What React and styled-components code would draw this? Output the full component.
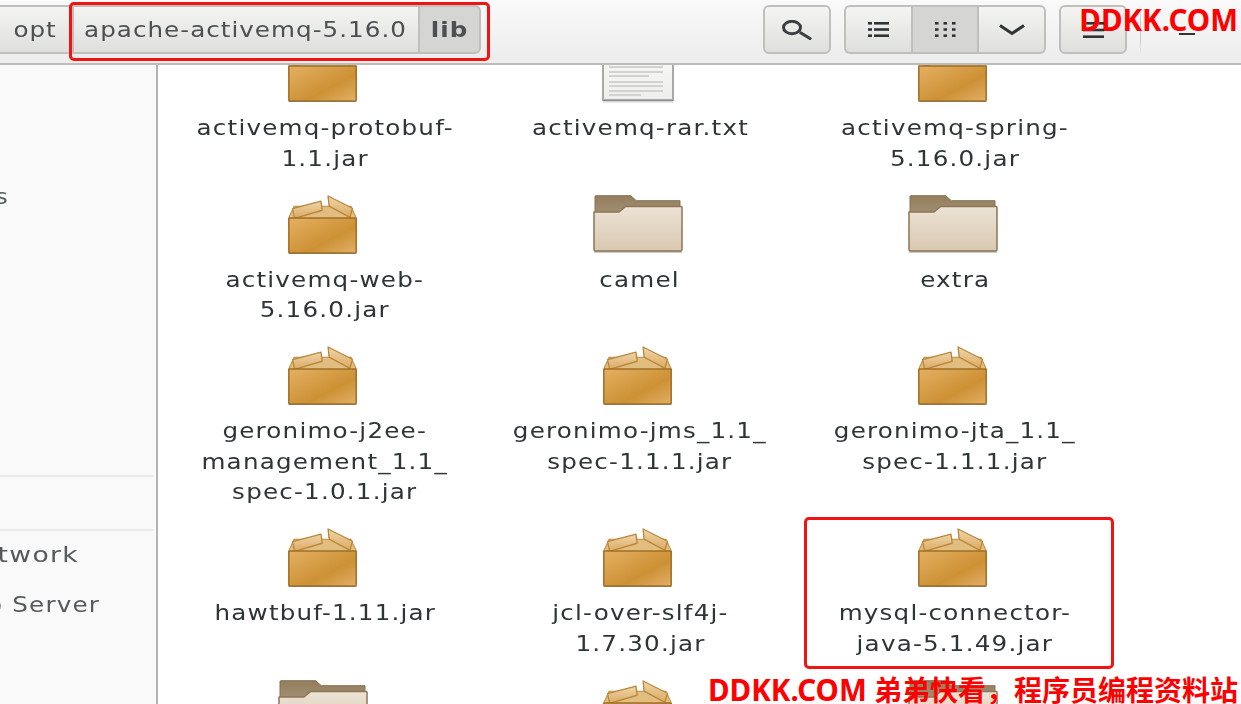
import React, { useId } from "react";
import styled, { createGlobalStyle } from "styled-components";

const Global = createGlobalStyle`
  html, body { margin: 0; padding: 0; background: #fff; overflow: hidden; }
  #root { width: 1241px; height: 704px; }
`;

const Page = styled.div`
  position: relative;
  width: 1241px;
  height: 704px;
  overflow: hidden;
  display: flex;
  flex-direction: column;
  font-family: "DejaVu Sans", sans-serif;
  color: #2e3436;
`;

const Blurred = styled.div`
  display: flex;
  flex-direction: column;
  flex: 1;
  min-height: 0;
  filter: blur(0.6px);
`;

const Toolbar = styled.header`
  flex: none;
  height: 65px;
  box-sizing: border-box;
  display: flex;
  align-items: flex-start;
  padding: 5px 0 0 0;
  background: linear-gradient(#fafafa, #ececec);
  border-bottom: 2px solid #bcbdbb;
`;

const Path = styled.div`
  display: flex;
  height: 49px;
  margin-left: -4px;
`;

const buttonFace = `
  box-sizing: border-box;
  height: 49px;
  display: flex;
  align-items: center;
  justify-content: center;
  background: linear-gradient(#f4f4f3, #dfdfde);
  border: 2px solid #bfc0be;
`;

const Crumb = styled.div`
  ${buttonFace}
  font-size: 20.5px;
  letter-spacing: 0.85px;
  color: #4c5052;
  width: ${(p) => p.$w}px;
  background: ${(p) => (p.$active ? "#d5d5d4" : "")};
  font-weight: ${(p) => (p.$active ? 700 : 400)};
  border-right-width: ${(p) => (p.$last ? "2px" : "0")};
  border-radius: ${(p) => (p.$last ? "0 6px 6px 0" : "0")};
`;

const Stretched = styled.span`
  display: inline-block;
  white-space: nowrap;
  transform: scaleX(1.2);
`;

const Spacer = styled.div`
  flex: 1;
`;

const Actions = styled.div`
  display: flex;
  align-items: flex-start;
  gap: 13px;
  width: 478px;
  flex: none;
`;

const IconButton = styled.div`
  ${buttonFace}
  width: 68px;
  border-radius: 6px;
`;

const Segmented = styled.div`
  display: flex;
  width: 202px;
`;

const Segment = styled.div`
  ${buttonFace}
  flex: 1;
  border-right-width: ${(p) => (p.$last ? "2px" : "0")};
  background: ${(p) => (p.$active ? "#d5d5d4" : "")};
  border-radius: ${(p) =>
    p.$first ? "6px 0 0 6px" : p.$last ? "0 6px 6px 0" : "0"};
`;

const WindowControls = styled.div`
  display: flex;
  align-items: center;
  height: 49px;
  gap: 38px;
`;

const ControlDivider = styled.div`
  width: 1px;
  height: 50px;
  background: linear-gradient(transparent, #c9c9c8 30%, #c9c9c8 70%, transparent);
`;

const Minimize = styled.div`
  width: 16px;
  height: 2.5px;
  background: #2e3436;
  margin-top: 9px;
`;

const Body = styled.div`
  flex: 1;
  min-height: 0;
  display: flex;
  overflow: hidden;
`;

const Sidebar = styled.aside`
  flex: none;
  width: 158px;
  box-sizing: border-box;
  background: #f9f9f9;
  border-right: 2px solid #b3b4b2;
  overflow: hidden;
  display: flex;
  flex-direction: column;
  font-size: 20.5px;
  letter-spacing: 1px;
  color: #555a5c;
`;

const SideRule = styled.div`
  flex: none;
  height: 2px;
  background: #ebebeb;
  margin-right: 2px;
  margin-top: ${(p) => p.$top}px;
`;

const SideItem = styled.div`
  flex: none;
  white-space: nowrap;
  line-height: 30px;
  margin-top: ${(p) => p.$top}px;
  margin-left: ${(p) => p.$left}px;
  transform: scaleX(${(p) => p.$scale});
  transform-origin: left center;
`;

const Main = styled.main`
  flex: 1;
  min-width: 0;
  overflow: hidden;
  background: #fff;
`;

const Grid = styled.div`
  display: grid;
  grid-template-columns: repeat(3, 315px);
  row-gap: 20.5px;
  margin: -22px 0 0 9.5px;
`;

const Cell = styled.div`
  display: flex;
  flex-direction: column;
  align-items: center;
`;

const IconSlot = styled.div`
  height: 58px;
  display: flex;
  align-items: flex-start;
  justify-content: center;
  padding-right: ${(p) => p.$pad}px;
  margin-bottom: 12px;
`;

const Label = styled.div`
  font-size: 20.5px;
  line-height: 30.5px;
  letter-spacing: 1px;
  text-align: center;
  white-space: nowrap;
  color: #2f3436;
  transform: scaleX(1.2);
`;

const Line = styled.div``;

const RedBox = styled.div`
  position: absolute;
  left: ${(p) => p.$x}px;
  top: ${(p) => p.$y}px;
  width: ${(p) => p.$w}px;
  height: ${(p) => p.$h}px;
  box-sizing: border-box;
  border: 3px solid #f01414;
  border-radius: 5px;
`;

const Watermark = styled.div`
  position: absolute;
  right: 3px;
  top: ${(p) => p.$top}px;
  font-family: "Noto Sans", "Noto Sans CJK SC", sans-serif;
  font-weight: 700;
  font-size: 28px;
  line-height: 1;
  color: #fe0000;
  white-space: nowrap;
`;

const WatermarkLatin = styled.span`
  font-size: 29.5px;
`;

function PackageIcon() {
  const id = useId();
  return (
    <svg width="69" height="59" viewBox="0 0 68 58" preserveAspectRatio="none">
      <defs>
        <linearGradient id={id + "b"} x1="0" y1="0" x2="1" y2="1">
          <stop offset="0" stopColor="#e4b062" />
          <stop offset="0.62" stopColor="#cd9135" />
          <stop offset="1" stopColor="#e3b067" />
        </linearGradient>
        <linearGradient id={id + "f"} x1="0" y1="0" x2="0" y2="1">
          <stop offset="0" stopColor="#eed5a9" />
          <stop offset="1" stopColor="#dcaa62" />
        </linearGradient>
      </defs>
      <path d="M6 11 L62 11 L67.5 23 L0.5 23 Z" fill="#e2bd80" stroke="#bb8c42" strokeWidth="1" />
      <path d="M4.5 13.5 L32.5 6 L33.7 15 L6.5 23 Z" fill={`url(#${id}f)`} stroke="#b9883b" strokeWidth="1.3" strokeLinejoin="round" />
      <path d="M39.5 1 L63.5 13 L61 22 L40.5 11 Z" fill={`url(#${id}f)`} stroke="#b9883b" strokeWidth="1.3" strokeLinejoin="round" />
      <rect x="0.8" y="22.5" width="66.4" height="34.5" rx="1" fill={`url(#${id}b)`} stroke="#a06f26" strokeWidth="1.5" />
      <rect x="0" y="57" width="68" height="1" fill="#000" opacity="0.18" />
    </svg>
  );
}

function FolderIcon() {
  const id = useId();
  return (
    <svg width="90" height="58" viewBox="0 0 90 58">
      <defs>
        <linearGradient id={id + "t"} x1="0" y1="0" x2="0" y2="1">
          <stop offset="0" stopColor="#937e5e" />
          <stop offset="1" stopColor="#a8957a" />
        </linearGradient>
        <linearGradient id={id + "g"} x1="0" y1="0" x2="0" y2="1">
          <stop offset="0" stopColor="#ece3d5" />
          <stop offset="1" stopColor="#d9c8b0" />
        </linearGradient>
      </defs>
      <path d="M2 1.5 Q2 0.7 3 0.7 L37.7 0.7 L43.3 5.7 L87 5.7 L87 26 L2 26 Z" fill={`url(#${id}t)`} stroke="#85704f" strokeWidth="1" />
      <path d="M1 17 L26 17 L32.7 11.5 L88.5 11.5 Q89 11.5 89 12.5 L89 54.5 Q89 56 87.5 56 L2.5 56 Q1 56 1 54.5 Z" fill={`url(#${id}g)`} stroke="#8c7654" strokeWidth="1.5" strokeLinejoin="round" />
      <rect x="1" y="56.5" width="88" height="1.5" fill="#000" opacity="0.2" />
    </svg>
  );
}

function DocIcon() {
  const rows = [24, 29, 33, 39, 43, 48, 52];
  const id = useId();
  return (
    <svg width="72" height="60" viewBox="0 0 72 60">
      <defs>
        <linearGradient id={id} x1="0" y1="0" x2="0" y2="1">
          <stop offset="0" stopColor="#fbfbfa" />
          <stop offset="1" stopColor="#eeeeec" />
        </linearGradient>
      </defs>
      <rect x="1" y="-2" width="70" height="59" fill={`url(#${id})`} stroke="#a9aaa8" strokeWidth="2" />
      <rect x="1" y="57" width="70" height="2.5" fill="#000" opacity="0.16" />
      {rows.map((y, i) => (
        <rect key={y} x="7" y={y - 1} width={i === 2 ? 40 : i === 6 ? 32 : 54} height="2" fill="#d2d3d1" />
      ))}
    </svg>
  );
}

const icons = {
  pkg: { Icon: PackageIcon, pad: 6 },
  folder: { Icon: FolderIcon, pad: 4 },
  doc: { Icon: DocIcon, pad: 4 },
};

const files = [
  ["pkg", ["activemq-protobuf-", "1.1.jar"]],
  ["doc", ["activemq-rar.txt", "\u00a0"]],
  ["pkg", ["activemq-spring-", "5.16.0.jar"]],
  ["pkg", ["activemq-web-", "5.16.0.jar"]],
  ["folder", ["camel", "\u00a0"]],
  ["folder", ["extra", "\u00a0"]],
  ["pkg", ["geronimo-j2ee-", "management_1.1_", "spec-1.0.1.jar"]],
  ["pkg", ["geronimo-jms_1.1_", "spec-1.1.1.jar"]],
  ["pkg", ["geronimo-jta_1.1_", "spec-1.1.1.jar"]],
  ["pkg", ["hawtbuf-1.11.jar", "\u00a0"]],
  ["pkg", ["jcl-over-slf4j-", "1.7.30.jar"]],
  ["pkg", ["mysql-connector-", "java-5.1.49.jar"]],
  ["folder", ["\u00a0"]],
  ["pkg", ["\u00a0"]],
  ["folder", ["\u00a0"]],
];

function FileCell({ kind, lines }) {
  const { Icon, pad } = icons[kind];
  return (
    <Cell>
      <IconSlot $pad={pad}>
        <Icon />
      </IconSlot>
      <Label>
        {lines.map((l, i) => (
          <Line key={i}>{l}</Line>
        ))}
      </Label>
    </Cell>
  );
}

export default function App() {
  return (
    <Page>
      <Global />
      <Blurred>
        <Toolbar>
          <Path>
            <Crumb $w={76}><Stretched>opt</Stretched></Crumb>
            <Crumb $w={346}><Stretched>apache-activemq-5.16.0</Stretched></Crumb>
            <Crumb $w={63} $active $last><Stretched>lib</Stretched></Crumb>
          </Path>
          <Spacer />
          <Actions>
            <IconButton>
              <svg width="30" height="20" viewBox="0 0 30 20" fill="none" stroke="#3a3f41">
                <ellipse cx="10" cy="7.5" rx="8.5" ry="6.2" strokeWidth="3" />
                <path d="M19 13 L28 18.5" strokeWidth="3.2" strokeLinecap="round" />
              </svg>
            </IconButton>
            <Segmented>
              <Segment $first>
                <svg width="21" height="15" viewBox="0 0 21 15" fill="#2e3436">
                  <rect x="0" y="0" width="4" height="2.6" />
                  <rect x="6" y="0" width="15" height="2.6" />
                  <rect x="0" y="6.2" width="4" height="2.6" />
                  <rect x="6" y="6.2" width="15" height="2.6" />
                  <rect x="0" y="12.4" width="4" height="2.6" />
                  <rect x="6" y="12.4" width="15" height="2.6" />
                </svg>
              </Segment>
              <Segment $active>
                <svg width="21" height="15" viewBox="0 0 21 15" fill="#2e3436">
                  {[0, 6.2, 12.4].flatMap((y) =>
                    [0, 8.5, 17].map((x) => <rect key={`${x}-${y}`} x={x} y={y} width="3.5" height="2.6" />)
                  )}
                </svg>
              </Segment>
              <Segment $last>
                <svg width="26" height="12" viewBox="0 0 26 12" fill="none" stroke="#2e3436" strokeWidth="3">
                  <path d="M1 1.5 L13 9.5 L25 1.5" />
                </svg>
              </Segment>
            </Segmented>
            <IconButton>
              <svg width="21" height="16" viewBox="0 0 21 16" fill="#2e3436">
                <rect x="0" y="0" width="21" height="2.6" />
                <rect x="0" y="6.7" width="21" height="2.6" />
                <rect x="0" y="13.4" width="21" height="2.6" />
              </svg>
            </IconButton>
            <WindowControls>
              <ControlDivider />
              <Minimize />
            </WindowControls>
          </Actions>
        </Toolbar>
        <Body>
          <Sidebar>
            <SideItem $top={117} $left={-80} $scale={1.2}>Videos</SideItem>
            <SideRule $top={263} />
            <SideRule $top={52} />
            <SideItem $top={9} $left={-156} $scale={1.3}>Browse Network</SideItem>
            <SideItem $top={20} $left={-143} $scale={1.2}>Connect to Server</SideItem>
          </Sidebar>
          <Main>
            <Grid>
              {files.map(([kind, lines], i) => (
                <FileCell key={i} kind={kind} lines={lines} />
              ))}
            </Grid>
          </Main>
        </Body>
      </Blurred>
      <RedBox $x={69} $y={2} $w={421} $h={59} />
      <RedBox $x={804} $y={517} $w={310} $h={152} />
      <Watermark $top={5}><WatermarkLatin>DDKK.COM</WatermarkLatin></Watermark>
      <Watermark $top={675}><WatermarkLatin>DDKK.COM</WatermarkLatin> 弟弟快看，程序员编程资料站</Watermark>
    </Page>
  );
}
